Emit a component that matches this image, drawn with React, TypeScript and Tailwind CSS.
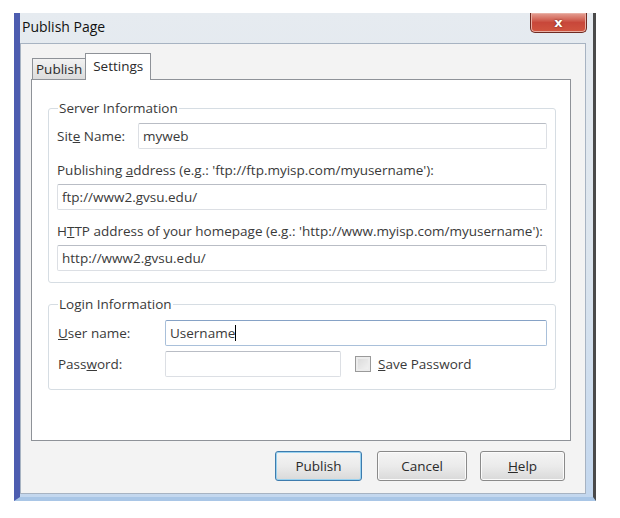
import React from "react";

const font = { fontFamily: '"Open Sans", "Noto Sans", sans-serif' };

function TextBox({ value, className = "", focused = false, caret = false }: { value?: string; className?: string; focused?: boolean; caret?: boolean }) {
  return (
    <div
      className={`h-[26px] flex items-center px-[4px] bg-white border rounded-[2px] ${
        focused ? "border-[#a9c0da] border-t-[#86a2c6]" : "border-[#dcdfe4] border-t-[#b9bdc5]"
      } ${className}`}
    >
      <span className="text-[13.5px] leading-[18px] text-[#3a3a3a] whitespace-nowrap">{value}</span>
      {caret && <span className="w-[1px] h-[16px] bg-black" />}
    </div>
  );
}

function Button({ children, def = false, w }: { children: React.ReactNode; def?: boolean; w: string }) {
  return (
    <div
      className={`${w} h-[30px] flex items-center justify-center rounded-[3px] border text-[13.5px] text-[#2a2a2a] bg-gradient-to-b from-[#f4f4f4] via-[#ebebeb] to-[#d9d9d9] ${
        def ? "border-[#3d7bad] shadow-[inset_0_0_0_1px_#98d1ef]" : "border-[#8a8a8a] shadow-[inset_0_0_0_1px_#fbfbfb]"
      }`}
    >
      {children}
    </div>
  );
}

export default function App() {
  return (
    <div className="w-[620px] h-[518px] bg-white pt-[13px] pl-[14px]" style={font}>
      <div className="w-[582px] h-[488px] flex flex-col border-l-[6px] border-l-[#4d5db0] border-r-[3px] border-r-[#4a4a4a] border-b-[4px] border-b-[#a9c6e6] bg-gradient-to-b from-[#e6ebf0] via-[#dce5ee] to-[#c3d7ee]">
        {/* Title bar */}
        <div className="h-[30px] flex justify-between items-start">
          <div className="pl-[2px] pt-[5px] text-[14px] leading-[18px] text-[#111]">Publish Page</div>
          <div className="mr-[6px] w-[57px] h-[20px] rounded-b-[5px] border border-t-0 border-[#6e2a22] bg-gradient-to-b from-[#e4a196] via-[#c8473a] to-[#d1553f] flex items-center justify-center shadow-[inset_0_0_0_1px_#e9b0a5]">
            <span className="text-white text-[13px] font-bold leading-[13px]" style={{ fontFamily: '"DejaVu Sans", sans-serif', textShadow: "0 0 2px #5a1a10" }}>x</span>
          </div>
        </div>
        {/* Inner frame */}
        <div className="flex-1 mr-[7px] mb-[3px] bg-[#f3f3f3] border border-[#a7b3c2] flex flex-col">
          {/* tabs */}
          <div className="pl-[11px] pt-[9px] h-[36px] flex items-end relative z-10">
            <div className="h-[21px] px-[3px] flex items-center border border-b-0 border-[#8e9298] bg-gradient-to-b from-[#f2f2f2] to-[#dcdcdc] text-[13.5px] text-[#2a2a2a] mb-[1px] -mr-[1px]">
              Publish
            </div>
            <div className="h-[27px] px-[7px] flex items-start pt-[2px] border border-b-0 border-[#8e9298] bg-white text-[13.5px] text-[#2a2a2a]">
              Settings
            </div>
          </div>
          {/* panel */}
          <div className="ml-[10px] -mt-px w-[540px] h-[362px] bg-white border border-[#8e9298] flex flex-col pt-[19px] pl-[16px]">
            {/* Server info */}
            <fieldset className="w-[508px] border border-[#d6dde3] rounded-[3px] px-[8px] pb-[11px] pt-[6px] text-[13.5px] text-[#3a3a3a]">
              <legend className="ml-[1px] px-[1px] leading-[18px]">Server Information</legend>
              <div className="flex items-center">
                <div className="w-[81px] leading-[18px]">
                  Sit<span className="underline">e</span> Name:
                </div>
                <TextBox value="myweb" className="flex-1" />
              </div>
              <div className="mt-[11px] mb-[4px] leading-[20px] whitespace-nowrap">
                Publishing <span className="underline">a</span>ddress (e.g.: 'ftp://ftp.myisp.com/myusername'):
              </div>
              <TextBox value="ftp://www2.gvsu.edu/" />
              <div className="mt-[11px] mb-[4px] leading-[20px] whitespace-nowrap">
                H<span className="underline">T</span>TP address of your homepage (e.g.: 'http://www.myisp.com/myusername'):
              </div>
              <TextBox value="http://www2.gvsu.edu/" />
            </fieldset>
            {/* Login info */}
            <fieldset className="mt-[12px] w-[508px] border border-[#d6dde3] rounded-[3px] px-[8px] pb-[12px] pt-[7px] text-[13.5px] text-[#3a3a3a]">
              <legend className="ml-[1px] px-[1px] leading-[18px]">Login Information</legend>
              <div className="flex items-center">
                <div className="w-[108px] pl-[1px]">
                  <span className="underline">U</span>ser name:
                </div>
                <TextBox value="Username" className="flex-1" focused caret />
              </div>
              <div className="flex items-center mt-[5px]">
                <div className="w-[108px] pl-[1px]">
                  Pass<span className="underline">w</span>ord:
                </div>
                <TextBox className="w-[176px]" />
                <div className="ml-[14px] w-[16px] h-[16px] border border-[#9a9a9a] bg-gradient-to-br from-[#d8d8d8] to-[#f4f4f4] shadow-[inset_0_0_0_2px_#ececec]" />
                <div className="ml-[7px]">
                  <span className="underline">S</span>ave Password
                </div>
              </div>
            </fieldset>
          </div>
          {/* buttons */}
          <div className="mt-[10px] flex justify-end pr-[20px]">
            <Button def w="w-[87px]">Publish</Button>
            <div className="w-[15px]" />
            <Button w="w-[90px]">Cancel</Button>
            <div className="w-[13px]" />
            <Button w="w-[85px]">
              <span className="underline">H</span>elp
            </Button>
          </div>
        </div>
      </div>
    </div>
  );
}
